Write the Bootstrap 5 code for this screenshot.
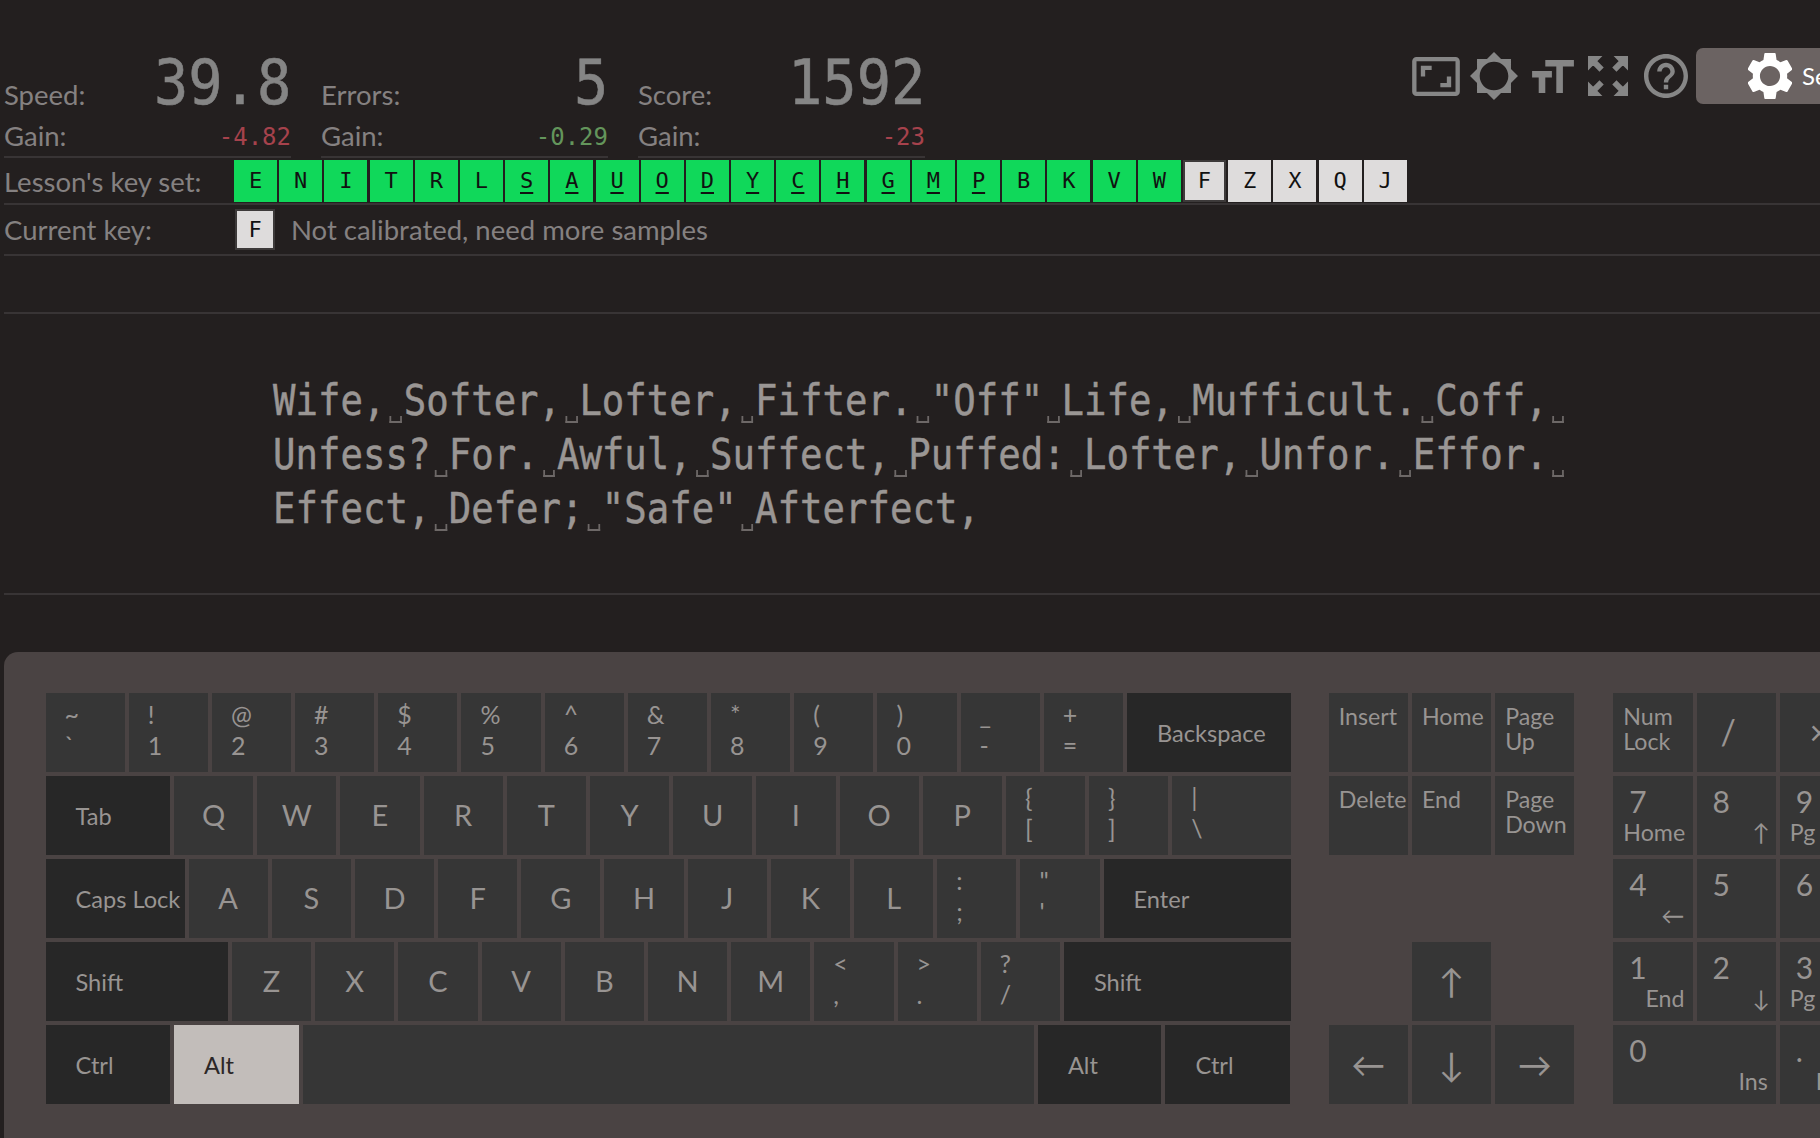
<!DOCTYPE html>
<html lang="en">
<head>
  <meta charset="UTF-8" />
  <title>Typing practice</title>
  <link rel="stylesheet" href="https://cdn.jsdelivr.net/npm/bootstrap@5.3.0/dist/css/bootstrap.min.css"/>
  <style>
    html, body { height: 100%; overflow: hidden; }
    body {
      background-color: #231f1f;
      color: #858181;
      font-family: Lato, sans-serif;
      font-size: 27.5px;
      line-height: 1;
    }
    .page { width: 1820px; height: 1138px; overflow: hidden; padding: 48px 0 0 4px; }
    .mono { font-family: "DejaVu Sans Mono", monospace; }

    .stats-top { height: 110px; }
    .stat-col { width: 287px; margin-right: 30px; flex: none; }
    .stat-main { height: 60px; padding-top: 4px; }
    .stat-num { font-size: 62px; color: #858585; transform: scaleX(.92); transform-origin: right; margin-bottom: -6px; -webkit-text-stroke: .6px currentColor; }
    .stat-gain { height: 50px; border-bottom: 2px solid #383435; padding-bottom: 7px; }
    .gain-num { font-size: 24px; }
    .gain-bad { color: #a6424c; }
    .gain-good { color: #63955b; }
    .tools { height: 56px; }
    .tool-icon { fill: #868686; display: block; flex: none; }
    .tool-bold { stroke: #868686; stroke-width: .7; }
    .gap-a { margin-left: 10px; }
    .gap-b { margin-left: 14px; }
    .gap-c { margin-left: 16px; }
    .settings-btn {
      background: #6b6362; color: #fff; border: 0; height: 56px; width: 124px; flex: none;
      border-radius: 7px 0 0 7px; padding: 0 0 0 52px; font-size: 24px; gap: 10px; margin-left: 8px;
      font-family: Lato, sans-serif; white-space: nowrap;
    }
    .settings-btn svg { fill: #fff; flex: none; }

    .info-row { border-bottom: 2px solid #383435; }
    .keyset-row { height: 47px; padding-top: 2px; }
    .current-row { height: 51px; }
    .info-label { width: 230px; flex: none; }
    .keyset-strip { gap: 2.2px; }
    .set-key {
      width: 43px; height: 42px; font-size: 22px; color: #111;
      display: flex; align-items: center; justify-content: center;
    }
    .k-on { background: #10d85a; }
    .k-off { background: #dedcdc; }
    .k-next { background: #dedcdc; outline: 2px solid #3d3a3a; outline-offset: -2px; }
    .u { text-decoration: underline; text-underline-offset: 4px; text-decoration-thickness: 2px; }
    .cur-key { width: 40px; height: 41px; border: 2px solid #3d3a3a; margin-left: 1px; margin-right: 16px; }
    .empty-row { height: 58px; border-bottom: 2px solid #383435; }

    .lesson { height: 281px; padding: 60px 0 0 269px; font-size: 42px; color: #9a9694; border-bottom: 2px solid #383435; }
    .lesson-line { height: 54px; line-height: 54px; white-space: nowrap; transform: scaleX(.889); transform-origin: left; -webkit-text-stroke: .5px currentColor; }
    .sp { display: inline-block; width: 20.6px; height: 10px; position: relative; }
    .sp::after {
      content: ""; position: absolute; left: 5px; right: 2px; bottom: -8px; height: 7px;
      border: solid #6d6867; border-width: 0 2px 2px;
    }

    .kbd-panel {
      margin-top: 57px; height: 500px; width: 1900px; background: #4a4343;
      border-radius: 14px 0 0 0; padding: 41px 0 0 41.5px; color: #989492;
      font-size: 23.2px;
    }
    .kb-rows { gap: 4px; }
    .kb-row { gap: 4px; height: 79px; }
    .kbd-key { background: #363636; width: 79.2px; height: 79px; flex: none; padding: 11px 0 0 10px; line-height: 1.06; }
    .kbd-key.dark { background: #272727; padding: 2px 0 0 30px; display: flex; align-items: center; font-size: 23.6px; }
    .kbd-key.letter { font-size: 29px; padding: 0; display: flex; align-items: center; justify-content: center; }
    .kbd-key.sym { padding: 6px 0 0 19px; line-height: 31px; font-size: 25px; }
    .kbd-key.num { padding: 7px 0 0 10px; position: relative; line-height: 1.15; }
    .kbd-key.arrow { font-size: 34px; padding: 0; display: flex; align-items: center; justify-content: center; }
    .kbd-key.slash { padding-right: 16px; }
    .kbd-key.pressed { background: #c2bdba; color: #2b2727; }
    .gap-nav { width: 37.5px; flex: none; }
    .gap-pad { width: 39px; flex: none; }
    .num-big { font-size: 30px; padding-left: 6px; display: block; line-height: 36px; }
    .num-sub { position: absolute; right: 8px; bottom: 9px; white-space: nowrap; word-spacing: 4px; }
    .num-sub.lft { right: auto; left: 10px; }
    .num-sub.arw { right: 6px; }
    .key-ghost { width: 79.2px; flex: none; }
  </style>
</head>
<body>
<div class="page">

  <div class="d-flex stats-top">
    <div class="stat-col">
      <div class="stat-main d-flex justify-content-between align-items-end"><span>Speed:</span><span class="stat-num mono">39.8</span></div>
      <div class="stat-gain d-flex justify-content-between align-items-end"><span>Gain:</span><span class="gain-num gain-bad mono">-4.82</span></div>
    </div>
    <div class="stat-col">
      <div class="stat-main d-flex justify-content-between align-items-end"><span>Errors:</span><span class="stat-num mono">5</span></div>
      <div class="stat-gain d-flex justify-content-between align-items-end"><span>Gain:</span><span class="gain-num gain-good mono">-0.29</span></div>
    </div>
    <div class="stat-col">
      <div class="stat-main d-flex justify-content-between align-items-end"><span>Score:</span><span class="stat-num mono">1592</span></div>
      <div class="stat-gain d-flex justify-content-between align-items-end"><span>Gain:</span><span class="gain-num gain-bad mono">-23</span></div>
    </div>

    <div class="d-flex align-items-center ms-auto tools">
      <svg class="tool-icon" width="48" height="39" viewBox="1 3 22 18"><path d="M19 12h-2v3h-3v2h5v-5zM7 9h3V7H5v5h2V9zm14-6H3c-1.1 0-2 .9-2 2v14c0 1.1.9 2 2 2h18c1.1 0 2-.9 2-2V5c0-1.1-.9-2-2-2zm0 16.01H3V4.99h18v14.02z"/></svg>
      <svg class="tool-icon gap-a" width="48" height="48" viewBox="0.69 0.69 22.62 22.62"><path fill-rule="evenodd" d="M20 15.31L23.31 12 20 8.69V4h-4.69L12 .69 8.69 4H4v4.69L.69 12 4 15.31V20h4.69L12 23.31 15.31 20H20v-4.69zM12 18.75c-3.73 0-6.75-3.02-6.75-6.75S8.27 5.25 12 5.25s6.75 3.02 6.75 6.75-3.02 6.75-6.75 6.75z"/></svg>
      <svg class="tool-icon gap-b" width="42" height="33" viewBox="3 4 19 15"><path d="M9 4v3h5v12h3V7h5V4H9zm-6 8h3v7h3v-7h3V9H3v3z"/></svg>
      <svg class="tool-icon tool-bold gap-b" width="40" height="40" viewBox="3 3 18 18"><path d="M15 3l2.3 2.3-2.89 2.87 1.42 1.42L18.7 6.7 21 9V3zM3 9l2.3-2.3 2.87 2.89 1.42-1.42L6.7 5.3 9 3H3zm6 12l-2.3-2.3 2.89-2.87-1.42-1.42L5.3 17.3 3 15v6zm12-6l-2.3 2.3-2.87-2.89-1.42 1.42 2.89 2.87L15 21h6z"/></svg>
      <svg class="tool-icon gap-c" width="44" height="44" viewBox="2 2 20 20"><path d="M11 18h2v-2h-2v2zm1-16C6.48 2 2 6.48 2 12s4.48 10 10 10 10-4.48 10-10S17.52 2 12 2zm0 18c-4.41 0-8-3.59-8-8s3.59-8 8-8 8 3.59 8 8-3.59 8-8 8zm0-14c-2.21 0-4 1.79-4 4h2c0-1.1.9-2 2-2s2 .9 2 2c0 2-3 1.75-3 5h2c0-2.25 3-2.5 3-5 0-2.21-1.79-4-4-4z"/></svg>
      <button class="settings-btn d-flex align-items-center">
        <svg width="44" height="46" viewBox="2.4 2 19.2 20"><path fill-rule="evenodd" d="M19.43 12.98c.04-.32.07-.64.07-.98s-.03-.66-.07-.98l2.11-1.65c.19-.15.24-.42.12-.64l-2-3.46c-.12-.22-.39-.3-.61-.22l-2.49 1c-.52-.4-1.08-.73-1.69-.98l-.38-2.65C14.46 2.18 14.25 2 14 2h-4c-.25 0-.46.18-.49.42l-.38 2.65c-.61.25-1.17.59-1.69.98l-2.49-1c-.23-.09-.49 0-.61.22l-2 3.46c-.13.22-.07.49.12.64l2.11 1.65c-.04.32-.07.65-.07.98s.03.66.07.98l-2.11 1.65c-.19.15-.24.42-.12.64l2 3.46c.12.22.39.3.61.22l2.49-1c.52.4 1.08.73 1.69.98l.38 2.65c.03.24.24.42.49.42h4c.25 0 .46-.18.49-.42l.38-2.65c.61-.25 1.17-.59 1.69-.98l2.49 1c.23.09.49 0 .61-.22l2-3.46c.12-.22.07-.49-.12-.64l-2.11-1.65zM12 16.4c-2.43 0-4.4-1.97-4.4-4.4s1.97-4.4 4.4-4.4 4.4 1.97 4.4 4.4-1.97 4.4-4.4 4.4z"/></svg>
        <span>Settings</span>
      </button>
    </div>
  </div>

  <div class="d-flex align-items-start info-row keyset-row">
    <span class="info-label align-self-center">Lesson's key set:</span>
    <div class="d-flex mono keyset-strip" id="keyset"></div>
  </div>
  <div class="d-flex align-items-center info-row current-row">
    <span class="info-label">Current key:</span>
    <div class="set-key k-off mono cur-key">F</div>
    <span>Not calibrated, need more samples</span>
  </div>
  <div class="empty-row"></div>

  <div class="lesson mono" id="lesson"></div>

  <div class="kbd-panel">
    <div class="d-flex" id="keyboard"></div>
  </div>
</div>

<script>
  // key set strip
  const setEl = document.getElementById("keyset");
  const underlined = "SAUODYCHGMP";
  "ENITRLSAUODYCHGMPBKVWFZXQJ".split("").forEach((k, i) => {
    const d = document.createElement("div");
    const off = i > 20;
    d.className = "set-key " + (k === "F" ? "k-next" : off ? "k-off" : "k-on");
    d.innerHTML = underlined.includes(k) ? `<span class="u">${k}</span>` : k;
    setEl.appendChild(d);
  });

  // lesson text, _ stands for the space marker
  const lessonEl = document.getElementById("lesson");
  [
    'Wife,_Softer,_Lofter,_Fifter._"Off"_Life,_Mufficult._Coff,_',
    'Unfess?_For._Awful,_Suffect,_Puffed:_Lofter,_Unfor._Effor._',
    'Effect,_Defer;_"Safe"_Afterfect,'
  ].forEach(line => {
    const d = document.createElement("div");
    d.className = "lesson-line";
    d.innerHTML = line.replace(/_/g, '<span class="sp"></span>');
    lessonEl.appendChild(d);
  });

  // keyboard: [label, kind, width]
  const two = (a, b) => [`${a}<br>${b}`, "sym"];
  const main = [
    [["~<br>`","sym"],two("!",1),two("@",2),two("#",3),two("$",4),two("%",5),two("^",6),two("&amp;",7),two("*",8),two("(",9),two(")",0),two("_","-"),two("+","="),["Backspace","dark",164]],
    [["Tab","dark",124.5],..."QWERTYUIOP".split("").map(c => [c,"letter"]),two("{","["),two("}","]"),["|<br>\\","sym",119]],
    [["Caps Lock","dark",139],..."ASDFGHJKL".split("").map(c => [c,"letter"]),two(":",";"),two('"',"'"),["Enter","dark",187.5]],
    [["Shift","dark",182.5],..."ZXCVBNM".split("").map(c => [c,"letter"]),two("&lt;",","),two("&gt;","."),two("?","/"),["Shift","dark",227]],
    [["Ctrl","dark",124.5],["Alt","dark pressed",124.5],["","",731.4],["Alt","dark",123.6],["Ctrl","dark",125]]
  ];
  const nav = [
    [["Insert",""],["Home",""],["Page<br>Up",""]],
    [["Delete",""],["End",""],["Page<br>Down",""]],
    [],
    [null,["↑","arrow"],null],
    [["←","arrow"],["↓","arrow"],["→","arrow"]]
  ];
  const pad = [
    [["Num<br>Lock",""],["/","arrow slash"],["×","arrow"]],
    [["7","num","Home","lft"],["8","num","↑","arw"],["9","num","Pg Up","lft"]],
    [["4","num","←"],["5","num"],["6","num","→"]],
    [["1","num","End"],["2","num","↓","arw"],["3","num","Pg Dn","lft"]],
    [["0","num","Ins",,162.4],[".","num","Del"]]
  ];

  function keyEl(def) {
    const d = document.createElement("div");
    if (!def) { d.className = "key-ghost"; return d; }
    d.className = "kbd-key " + (def[1] || "");
    if (def[1] === "num") {
      d.innerHTML = `<span class="num-big">${def[0]}</span>` + (def[2] ? `<span class="num-sub ${def[3] || ""}">${def[2]}</span>` : "");
      if (def[4]) d.style.width = def[4] + "px";
    } else {
      d.innerHTML = def[0];
      if (def[2]) d.style.width = def[2] + "px";
    }
    return d;
  }
  function block(rows) {
    const b = document.createElement("div");
    b.className = "d-flex flex-column kb-rows flex-shrink-0";
    rows.forEach(r => {
      const row = document.createElement("div");
      row.className = "d-flex kb-row";
      r.forEach(def => row.appendChild(keyEl(def)));
      b.appendChild(row);
    });
    return b;
  }
  const kb = document.getElementById("keyboard");
  kb.appendChild(block(main));
  let g = document.createElement("div"); g.className = "gap-nav"; kb.appendChild(g);
  kb.appendChild(block(nav));
  g = document.createElement("div"); g.className = "gap-pad"; kb.appendChild(g);
  kb.appendChild(block(pad));
</script>
</body>
</html>
